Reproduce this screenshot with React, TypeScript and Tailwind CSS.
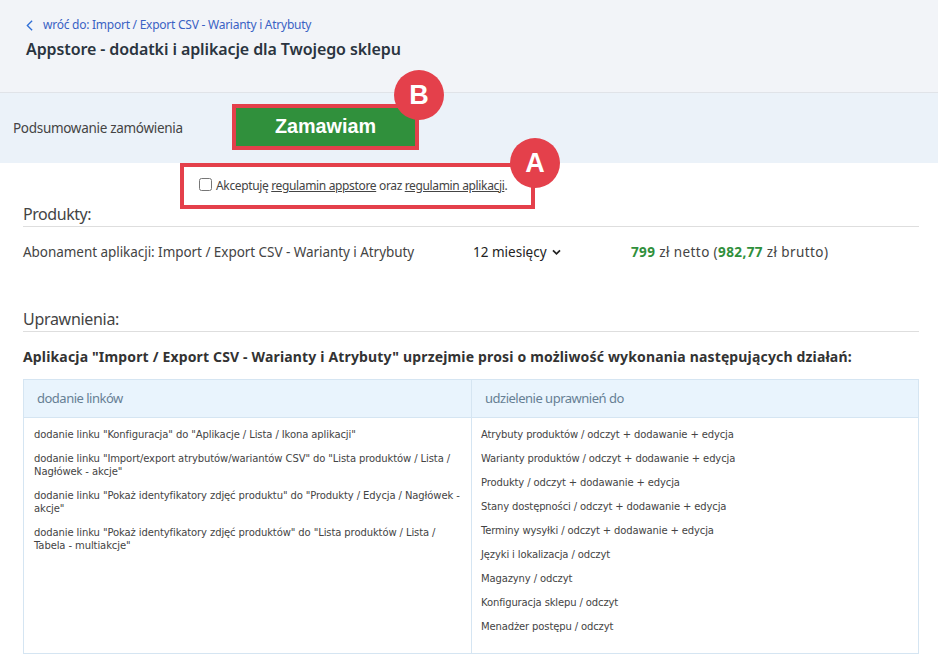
const links = [
  'dodanie linku "Konfiguracja" do "Aplikacje / Lista / Ikona aplikacji"',
  'dodanie linku "Import/export atrybutów/wariantów CSV" do "Lista produktów / Lista / Nagłówek - akcje"',
  'dodanie linku "Pokaż identyfikatory zdjęć produktu" do "Produkty / Edycja / Nagłówek - akcje"',
  'dodanie linku "Pokaż identyfikatory zdjęć produktów" do "Lista produktów / Lista / Tabela - multiakcje"',
];

const perms = [
  'Atrybuty produktów / odczyt + dodawanie + edycja',
  'Warianty produktów / odczyt + dodawanie + edycja',
  'Produkty / odczyt + dodawanie + edycja',
  'Stany dostępności / odczyt + dodawanie + edycja',
  'Terminy wysyłki / odczyt + dodawanie + edycja',
  'Języki i lokalizacja / odczyt',
  'Magazyny / odczyt',
  'Konfiguracja sklepu / odczyt',
  'Menadżer postępu / odczyt',
];

function Marker({ label, className }: { label: string; className: string }) {
  return (
    <div className={`absolute flex h-[50px] w-[50px] items-center justify-center rounded-full bg-[#e4404b] text-[27px] font-bold text-white font-['Liberation_Sans',sans-serif] ${className}`}>
      {label}
    </div>
  );
}

export default function App() {
  return (
    <div className="h-[668px] w-[938px] overflow-hidden bg-white font-['Noto_Sans',sans-serif] text-[#333]">
      <header className="h-[93px] border-b border-[#e0e3e8] bg-[#f2f4f8] pl-[26px] pt-[16px]">
        <div className="flex h-[18px] items-center text-[12px] tracking-[-0.25px] text-[#3a62c4]">
          <svg viewBox="0 0 8 13" className="mr-[10px] h-[13px] w-[7px]" fill="none" stroke="#2f6fd6" strokeWidth="1.5">
            <path d="M7 1L1.5 6.5 7 12" />
          </svg>
          <span>wróć do: Import / Export CSV - Warianty i Atrybuty</span>
        </div>
        <h1 className="mt-[3px] text-[16px] leading-[24px] font-semibold tracking-[-0.1px] text-[#2b3440]">
          Appstore - dodatki i aplikacje dla Twojego sklepu
        </h1>
      </header>

      <div className="relative flex h-[70px] items-center bg-[#ebf2f9] pl-[13px]">
        <span className="w-[219px] text-[13.5px] tracking-[-0.3px] text-[#444]">Podsumowanie zamówienia</span>
        <button className="mb-[2px] h-[46px] w-[187px] border-[4px] border-[#e4404b] bg-[#30903c] text-[19.8px] font-bold text-white font-['Liberation_Sans',sans-serif]">
          Zamawiam
        </button>
        <Marker label="B" className="left-[394px] top-[-23px]" />
      </div>

      <div className="relative">
        <div className="ml-[180px] flex h-[46px] w-[355px] items-center border-[4px] border-[#e4404b] pl-[15px] text-[12px] tracking-[-0.35px] text-[#444]">
          <input type="checkbox" className="mb-[4px] mr-[4px] h-[13px] w-[13px]" />
          <span>
            Akceptuję <u>regulamin appstore</u> oraz <u>regulamin aplikacji</u>.
          </span>
        </div>
        <Marker label="A" className="left-[510px] top-[-25px]" />
      </div>

      <section className="pl-[23px] pr-[19px]">
        <h2 className="border-b border-[#dedede] pb-[6px] text-[16px] leading-[11px] tracking-[-0.45px] text-[#444]">Produkty:</h2>
        <div className="mt-[15px] flex h-[20px] items-center text-[13.5px] tracking-[-0.05px] text-[#444]">
          <span className="w-[450px]">Abonament aplikacji: Import / Export CSV - Warianty i Atrybuty</span>
          <span className="flex w-[158px] items-center tracking-[0px] text-[#222]">
            12 miesięcy
            <svg viewBox="0 0 10 8" className="ml-[5px] h-[7px] w-[9px]" fill="none" stroke="#222" strokeWidth="2">
              <path d="M1 1.5l4 4 4-4" />
            </svg>
          </span>
          <span className="tracking-[0.4px]">
            <b className="font-bold text-[#30903c]">799</b> zł netto (<b className="font-bold text-[#30903c]">982,77</b> zł brutto)
          </span>
        </div>

        <h2 className="mt-[47px] border-b border-[#dedede] pb-[2px] text-[16px] leading-[20px] tracking-[-0.3px] text-[#444]">Uprawnienia:</h2>
        <p className="mt-[15px] text-[14px] leading-[20px] font-bold tracking-[0.16px] text-[#333]">
          Aplikacja "Import / Export CSV - Warianty i Atrybuty" uprzejmie prosi o możliwość wykonania następujących działań:
        </p>

        <div className="mt-[12px] grid h-[275px] grid-cols-[448px_1fr] grid-rows-[38px_1fr] border border-[#d5e5f2] font-['DejaVu_Sans',sans-serif] text-[10px] text-[#444]">
          <div className="flex items-center border-b border-r border-[#d5e5f2] bg-[#e9f4fd] pl-[13px] font-['Noto_Sans',sans-serif] text-[13px] tracking-[-0.5px] text-[#667f94]">dodanie linków</div>
          <div className="flex items-center border-b border-[#d5e5f2] bg-[#e9f4fd] pl-[13px] font-['Noto_Sans',sans-serif] text-[13px] tracking-[-0.5px] text-[#667f94]">udzielenie uprawnień do</div>
          <div className="border-r border-[#d5e5f2] px-[10px] pt-[10px]">
            {links.map((l) => (
              <p key={l} className="mb-[11px] leading-[13px] tracking-[-0.1px]">{l}</p>
            ))}
          </div>
          <div className="pl-[9px] pt-[10px]">
            {perms.map((p) => (
              <p key={p} className="mb-[11px] leading-[13px] tracking-[-0.13px]">{p}</p>
            ))}
          </div>
        </div>
      </section>
    </div>
  );
}
